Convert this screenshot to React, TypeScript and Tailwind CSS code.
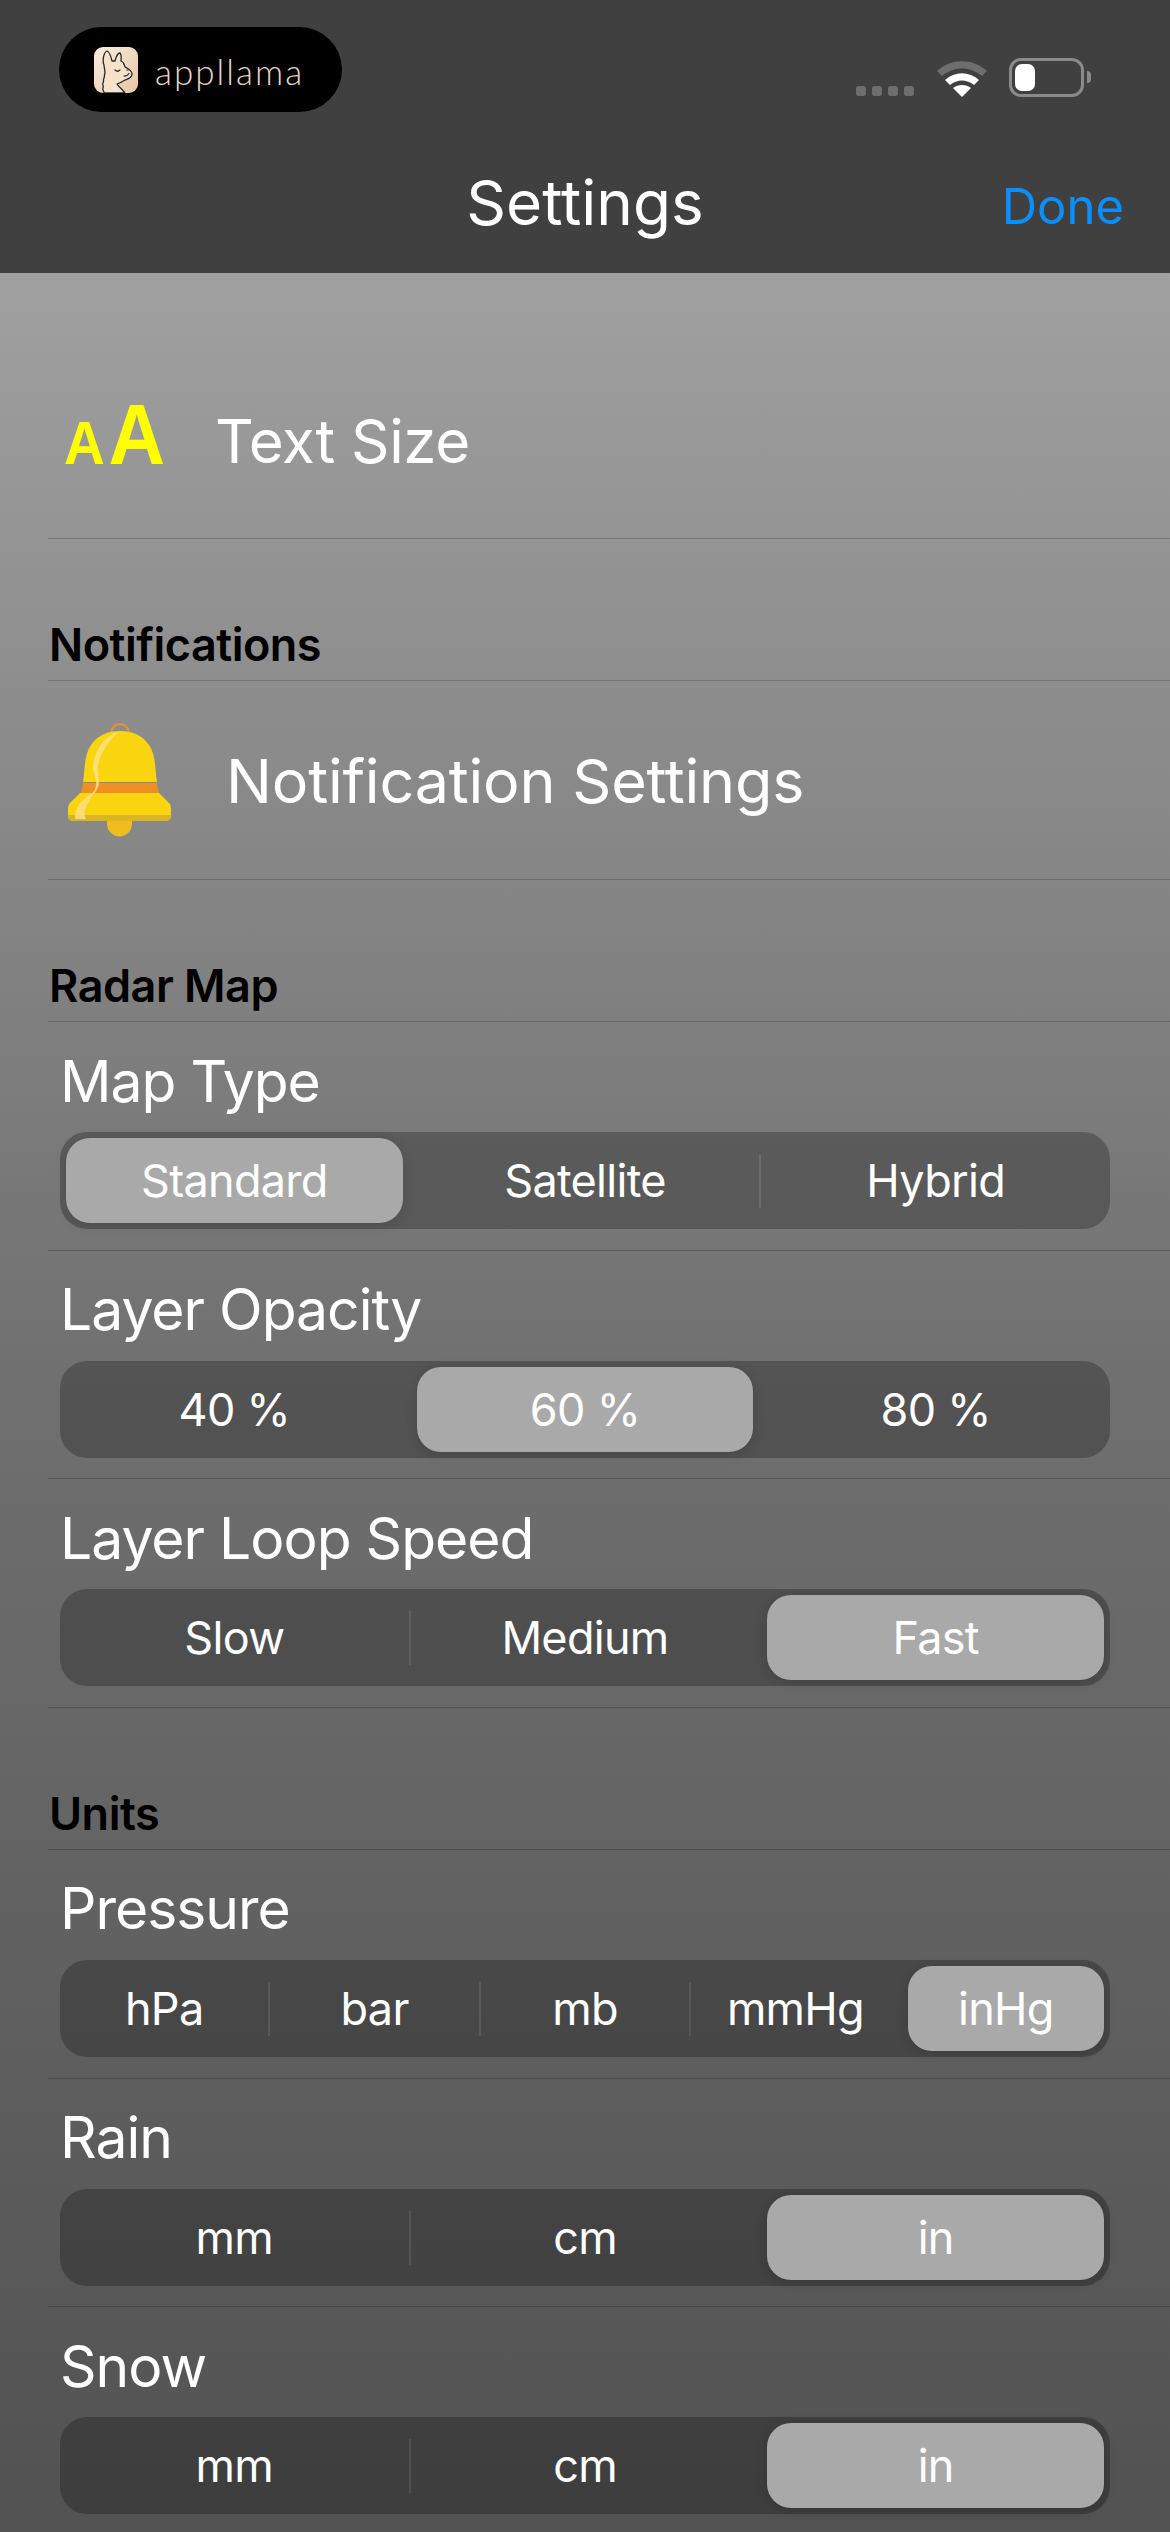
const font = "font-['Inter','Noto_Sans',sans-serif]";

type SegmentProps = { options: string[]; selected: number };

function Segmented({ options, selected }: SegmentProps) {
  return (
    <div className="flex gap-[14px] h-[97px] p-[6px] rounded-[27px] bg-black/25">
      {options.map((opt, i) => {
        const showDivider = i < options.length - 1 && i !== selected && i + 1 !== selected;
        return (
          <div key={opt} className="relative flex-1 flex">
            <div
              className={`flex-1 flex items-center justify-center rounded-[24px] text-[45px] leading-none tracking-[-0.7px] text-white ${
                i === selected ? "bg-[#a9a9a9] shadow-[0_2px_12px_rgba(0,0,0,0.15)]" : ""
              }`}
            >
              {opt}
            </div>
            {showDivider && (
              <div className="absolute right-[-8px] top-[16px] h-[54px] w-[2px] bg-white/10" />
            )}
          </div>
        );
      })}
    </div>
  );
}

function SegmentRow({ label, options, selected }: { label: string } & SegmentProps) {
  return (
    <div className="ml-[48px] h-[228.67px] border-b border-black/20">
      <div className="h-[110px] pt-[8px] ml-[12px] flex items-center text-[57px] leading-none tracking-[-1px] text-white">
        {label}
      </div>
      <div className="ml-[12px] mr-[60px]">
        <Segmented options={options} selected={selected} />
      </div>
    </div>
  );
}

function SectionTitle({ title }: { title: string }) {
  return (
    <div className="ml-[48px] h-[142px] flex items-end pl-[1px] pb-[13px] border-b border-black/20 font-semibold text-[45px] leading-none tracking-[-0.5px] text-black">
      {title}
    </div>
  );
}

function Llama() {
  return (
    <svg width="44" height="46" viewBox="0 0 44 46">
      <defs>
        <linearGradient id="llamaBg" x1="0" y1="0" x2="1" y2="1">
          <stop offset="0" stopColor="#fbeee0" />
          <stop offset="1" stopColor="#e6c5a3" />
        </linearGradient>
      </defs>
      <rect width="44" height="46" rx="9" fill="url(#llamaBg)" />
      <path
        d="M10 46 C10 43 8 43 9 41 C10 39 8 38 9 36 C10 34 9 33 10 31 C11 29 10 28 11 26 C11 23 10 20 10 18 C8 13 10 5 13 4 C16 5 17 10 18 14 L21 14 C22 10 24 6 26 6 C28 8 27 11 27 14 C30 15 30 17 31 20 C35 22 38 25 38 27 C38 31 34 32 31 33 C28 35 26 36 23 37 C25 40 29 43 31 46 Z"
        fill="#f7e2c9"
        stroke="#23282c"
        strokeWidth="1.3"
        strokeLinejoin="round"
      />
      <path d="M21 23 q2.500 2.500 5 0 M30 29 q3 0.500 5 -2.500 M33 23 l1 0" fill="none" stroke="#23282c" strokeWidth="1.2" strokeLinecap="round" />
    </svg>
  );
}

function Bell() {
  return (
    <svg width="104" height="114" viewBox="0 0 104 114">
      <circle cx="52" cy="10" r="9" fill="none" stroke="#f0912a" strokeWidth="2" />
      <path d="M39 96 H64 V101 A12.500 12.500 0 0 1 39 101 Z" fill="#f0bd1c" />
      <path d="M15 59 C17 47 16 32 23 22 C30 12 40 8 52 8 C64 8 74 12 81 22 C88 32 87 47 89 59 Z" fill="#f9d510" />
      <path d="M15 60 H89 L91 70 H13 Z" fill="#ec9024" />
      <path d="M12 70 H91 L102 81 Q103 83 103 87 V92 Q103 98 97 98 H6 Q0 98 0 92 V87 Q0 83 1 81 Z" fill="#f9d510" />
      <path d="M0 92 H103 Q103 98 97 98 H6 Q0 98 0 92 Z" fill="#d9b524" />
      <path
        d="M50 9 C38 12 27 26 25 43 C25 50 28 54 28 59 C28 65 27 68 24 70 C18 75 7 80 7 96 H18 C15 90 17 83 25 72 C29 67 31 64 31 59 C31 53 29 48 30 43 C31 34 37 22 50 9 Z"
        fill="#fbe28a"
        fillOpacity="0.8"
      />
    </svg>
  );
}

function StatusIcons() {
  return (
    <div className="flex items-start">
      <div className="flex gap-[6px] mt-[28px]">
        <div className="w-[10px] h-[10px] rounded-[3px] bg-[#6e6e6e]" />
        <div className="w-[10px] h-[10px] rounded-[3px] bg-[#6e6e6e]" />
        <div className="w-[10px] h-[10px] rounded-[3px] bg-[#6e6e6e]" />
        <div className="w-[10px] h-[10px] rounded-[3px] bg-[#6e6e6e]" />
      </div>
      <svg width="52" height="38" viewBox="0 0 52 38" className="ml-[22px] mt-[1px]">
        <path d="M1 12 C15 -1 37 -1 51 12 L46 17 C34 7 18 7 6 17 Z" fill="#6e6e6e" />
        <path d="M9 21 C19 12 33 12 43 21 L38 26 C31 20 21 20 14 26 Z" fill="#fff" />
        <path d="M17 29 C22 25 30 25 35 29 L26 38 Z" fill="#fff" />
      </svg>
      <div className="ml-[21px] w-[75px] h-[39px] rounded-[12px] border-[3px] border-[#8a8a8a] p-[3px]">
        <div className="w-[20px] h-full rounded-[7px] bg-white" />
      </div>
      <div className="ml-[3px] mt-[13px] w-[4px] h-[12px] rounded-r-full bg-[#8a8a8a]" />
    </div>
  );
}

export default function App() {
  return (
    <div className={`w-[1170px] h-[2532px] overflow-hidden ${font}`}>
      <div className="relative h-[273px] bg-[#404040]">
        <div className="flex items-start justify-between pl-[59px] pr-[79px] pt-[27px]">
          <div className="flex items-center w-[283px] h-[85px] pl-[35px] rounded-full bg-black">
            <Llama />
            <span className="ml-[17px] mt-[4px] font-['Lato',sans-serif] font-light text-[35px] leading-none tracking-[2px] text-[#e6d5c5]">
              appllama
            </span>
          </div>
          <div className="pt-[31px]">
            <StatusIcons />
          </div>
        </div>
        <div className="absolute left-0 right-0 top-[172px] text-center text-[62px] leading-none text-white">Settings</div>
        <div className="absolute right-[46px] top-[182px] text-[49px] leading-none text-[#0a8fff]">Done</div>
      </div>

      <div className="h-[2259px] bg-gradient-to-b from-[#a0a0a0] via-[#6f6f6f] to-[#525252]">
        <div className="ml-[48px] h-[266px] flex items-center pt-[70px] border-b border-black/20">
          <div className="w-[169px] mb-[14px] pl-[16px]">
            <div className="flex items-baseline origin-left scale-x-[0.91] font-['Liberation_Sans',sans-serif] font-bold leading-none text-[#ffff00]">
              <span className="text-[62px] mr-[4px]">A</span>
              <span className="text-[86px]">A</span>
            </div>
          </div>
          <span className="ml-[-2px] text-[60px] leading-none tracking-[-0.4px] text-white">Text Size</span>
        </div>

        <SectionTitle title="Notifications" />

        <div className="ml-[48px] h-[199px] flex items-center border-b border-black/20">
          <div className="ml-[20px] w-[158px]">
            <Bell />
          </div>
          <span className="pt-[2px] text-[61px] leading-none tracking-[-0.2px] text-white">Notification Settings</span>
        </div>

        <SectionTitle title="Radar Map" />
        <SegmentRow label="Map Type" options={["Standard", "Satellite", "Hybrid"]} selected={0} />
        <SegmentRow label="Layer Opacity" options={["40 %", "60 %", "80 %"]} selected={1} />
        <SegmentRow label="Layer Loop Speed" options={["Slow", "Medium", "Fast"]} selected={2} />

        <SectionTitle title="Units" />
        <SegmentRow label="Pressure" options={["hPa", "bar", "mb", "mmHg", "inHg"]} selected={4} />
        <SegmentRow label="Rain" options={["mm", "cm", "in"]} selected={2} />
        <SegmentRow label="Snow" options={["mm", "cm", "in"]} selected={2} />
      </div>
    </div>
  );
}
